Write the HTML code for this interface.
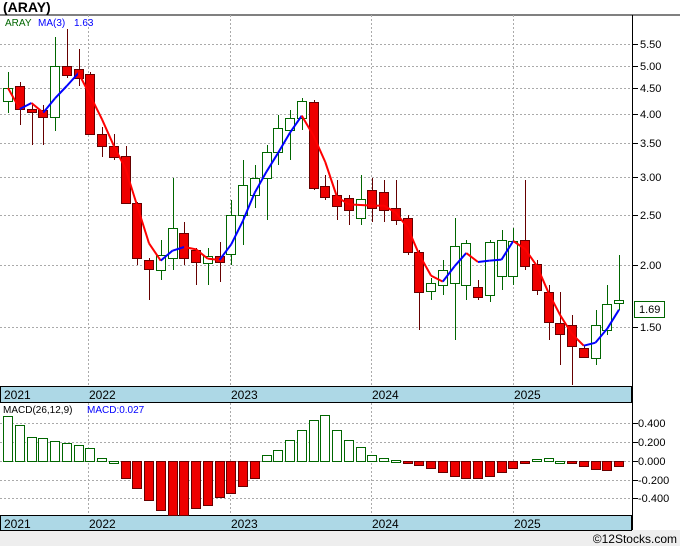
<!DOCTYPE html>
<html><head><meta charset="utf-8"><style>
body{margin:0;background:#fff;width:680px;height:546px;overflow:hidden;font-family:"Liberation Sans",sans-serif}
svg text{font-family:"Liberation Sans",sans-serif}
</style></head><body>
<svg id="s" width="680" height="546" xmlns="http://www.w3.org/2000/svg">
<rect x="0" y="0" width="680" height="546" fill="#fff"/>
<text x="3" y="12" font-size="14" font-weight="bold" fill="#000">(ARAY)</text>
<line x1="0" y1="15" x2="680" y2="15" stroke="#000"/>
<rect x="0" y="530" width="680" height="16" fill="#eee"/>
<text x="677" y="543" font-size="12" fill="#000" text-anchor="end">©12Stocks.com</text>
<g id="g"></g>
</svg>
<script>
var g=document.getElementById('g'),h='';
function L(a,b,c,d,col,w,da){h+='<line x1="'+a+'" y1="'+b+'" x2="'+c+'" y2="'+d+'" stroke="'+col+'" stroke-width="'+(w||1)+'"'+(da?' stroke-dasharray="'+da+'"':'')+'/>';}
function R(x,y,w,hh,f,s){h+='<rect x="'+x+'" y="'+y+'" width="'+w+'" height="'+hh+'" fill="'+f+'" stroke="'+s+'"/>';}
function T(x,y,t,c,sz,a){h+='<text x="'+x+'" y="'+y+'" font-size="'+(sz||11)+'" fill="'+c+'"'+(a?' text-anchor="'+a+'"':'')+'>'+t+'</text>';}
// grids main
var ly=[[44,'5.50'],[66,'5.00'],[88,'4.50'],[114,'4.00'],[143,'3.50'],[177,'3.00'],[215,'2.50'],[265,'2.00'],[327,'1.50']];
ly.forEach(function(p){L(0,p[0]+.5,632,p[0]+.5,'#aaa',1,'2,2');L(632,p[0]+.5,638,p[0]+.5,'#000');T(640,p[0]+4,p[1],'#000',11);});
[88,230,371,513].forEach(function(x){L(x+.5,15,x+.5,386,'#aaa',1,'2,2');L(x+.5,403,x+.5,515,'#aaa',1,'2,2');});
// date strips
[[386,16],[515,15]].forEach(function(p){R(0.5,p[0]+.5,631,p[1],'#add8e6','#000');
[[3,'2021'],[88,'2022'],[230,'2023'],[371,'2024'],[513,'2025']].forEach(function(q){T(q[0]+1,p[0]+13,q[1],'#000',12);});});
L(632.5,15,632.5,530,'#000');L(0,402.5,632,402.5,'#000');
// macd grid
[[423,'0.400'],[442,'0.200'],[461,'0.000'],[480,'-0.200'],[498,'-0.400']].forEach(function(p){L(0,p[0]+.5,632,p[0]+.5,'#aaa',1,'2,2');L(632,p[0]+.5,638,p[0]+.5,'#000');T(638,p[0]+4,p[1],'#000',11);});
// candles [open(y),close(y),high,low,green]
var c=[[101,88,72,113,1],[86,109,82,125,0],[109,112,105,145,0],[110,117,105,145,0],[117,66,37,131,1],[66,75,29,78,0],[69,78,49,86,0],[74,134,72,135,0],[134,146,127,157,0],[146,157,134,160,0],[156,203,146,203,0],[203,258,202,265,0],[260,269,258,300,0],[270,255,240,280,1],[258,228,178,270,1],[233,258,222,265,0],[250,262,248,285,0],[263,256,248,285,1],[256,262,242,282,0],[254,215,200,265,1],[215,185,160,245,1],[195,178,165,208,1],[178,152,145,220,1],[152,128,115,165,1],[130,118,110,160,1],[118,101,98,130,1],[102,188,100,190,0],[186,197,175,200,0],[195,206,180,220,0],[198,210,195,225,0],[218,199,175,225,1],[190,208,178,222,0],[192,210,180,222,0],[208,220,180,225,0],[218,252,215,255,0],[252,292,250,330,0],[291,283,278,300,1],[285,270,260,295,1],[283,246,218,340,1],[285,243,240,300,1],[287,297,280,300,0],[295,242,240,302,1],[276,240,230,290,1],[276,241,228,285,1],[240,266,180,270,0],[264,290,260,295,0],[292,322,285,340,0],[323,334,292,365,0],[325,346,315,385,0],[348,357,345,358,0],[358,325,310,365,1],[330,304,285,335,1],[303,300,255,310,1]];
var X=function(i){return 8+11.75*i;};
c.forEach(function(d,i){var x=Math.round(X(i));var gr=d[4],col=gr?'#060':'#600';
L(x+.5,d[2],x+.5,d[3],col);var t=Math.min(d[0],d[1]),hh=Math.max(2,Math.abs(d[0]-d[1]));
R(x-4.5,t+.5,9,hh,gr?'#fff':'#e00',gr?'#060':'#600');});
// MA
var ma=c.map(function(d,i){if(i<2)return d[1];return (c[i][1]+c[i-1][1]+c[i-2][1])/3;});
for(var i=1;i<c.length;i++){var up=ma[i]<ma[i-1];L(X(i-1),ma[i-1],X(i),ma[i],up?'#00f':'#f00',2);}
// macd
var m=[416,425,437,438,441,443,445,448,458,461,478,488,500,510,515,515,508,505,497,493,486,478,455,450,440,430,420,415,430,440,447,455,458,460,463,465,468,472,476,478,478,476,472,468,462,459,458,461,463,466,469,470,466,459];
m=m.slice(0,c.length);
m.forEach(function(v,i){var x=Math.round(X(i));var pos=v<=461,t=Math.min(v,461),hh=Math.max(2,Math.abs(v-461));
R(x-4.5,t+.5,9,hh,pos?'#fff':'#e00',pos?'#060':'#600');});
// labels
T(5,26,'ARAY','#060',10);T(38,26,'MA(3)','#00f',10);T(74,26,'1.63','#00f',10);
T(3,413,'MACD(26,12,9)','#000',10);T(87,413,'MACD:0.027','#00f',10);
R(634.5,301.5,30,16,'#fff','#060');T(639,313,'1.69','#000',11);
g.innerHTML=h;
</script>
</body></html>
